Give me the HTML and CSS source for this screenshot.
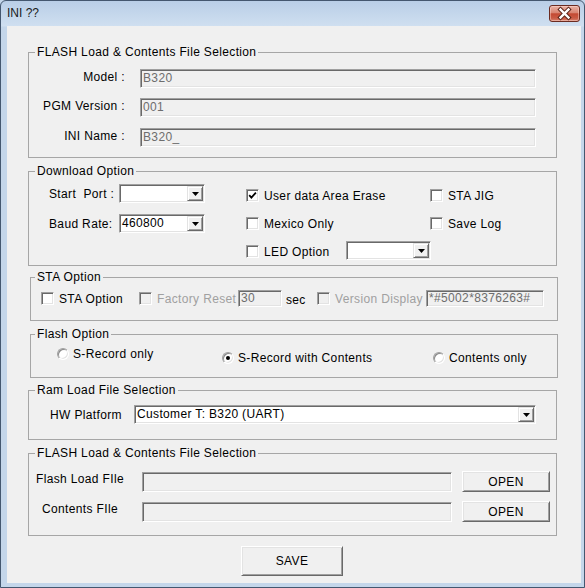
FILE: index.html
```html
<!DOCTYPE html>
<html>
<head>
<meta charset="utf-8">
<title>INI</title>
<link rel="stylesheet" href="styles.css">
</head>
<body>
<div class="window">
  <div class="titlebar">
    <span class="title">INI ??</span>
    <div class="close-btn">
      <svg width="29" height="15" viewBox="0 0 29 15">
        <path d="M10.5 3.5 L18.5 11.5 M18.5 3.5 L10.5 11.5" stroke="#5a2418" stroke-width="4.4" stroke-linecap="square" fill="none"/>
        <path d="M10.5 3.5 L18.5 11.5 M18.5 3.5 L10.5 11.5" stroke="#ffffff" stroke-width="2.4" stroke-linecap="square" fill="none"/>
      </svg>
    </div>
  </div>
  <div class="client">
    <fieldset class="group g1">
      <legend>FLASH Load &amp; Contents File Selection</legend>
      <div class="info-row">
        <span class="info-label">Model :</span>
        <div class="edit disabled info-edit">B320</div>
      </div>
      <div class="info-row r2">
        <span class="info-label">PGM Version :</span>
        <div class="edit disabled info-edit">001</div>
      </div>
      <div class="info-row r3">
        <span class="info-label">INI Name :</span>
        <div class="edit disabled info-edit">B320_</div>
      </div>
    </fieldset>

    <fieldset class="group g2">
      <legend>Download Option</legend>
      <div class="group-body">
        <div class="dl-row">
          <span class="dl-label">Start&nbsp; Port :</span>
          <div class="combo w86"><span class="combo-text"></span><span class="combo-btn"><svg width="7" height="4" viewBox="0 0 7 4"><path d="M0 0H7L3.5 4Z" fill="#000"/></svg></span></div>
          <label class="check col3 low2"><span class="box"><svg width="9" height="9" viewBox="0 0 9 9"><path d="M1.2 4.2 L3.4 6.6 L7.9 1.6" stroke="#000" stroke-width="1.8" fill="none"/></svg></span><span>User data Area Erase</span></label>
          <label class="check low2"><span class="box"></span><span>STA JIG</span></label>
        </div>
        <div class="dl-row row2">
          <span class="dl-label">Baud Rate:</span>
          <div class="combo w86"><span class="combo-text">460800</span><span class="combo-btn"><svg width="7" height="4" viewBox="0 0 7 4"><path d="M0 0H7L3.5 4Z" fill="#000"/></svg></span></div>
          <label class="check col3"><span class="box"></span><span>Mexico Only</span></label>
          <label class="check"><span class="box"></span><span>Save Log</span></label>
        </div>
        <div class="dl-row row3">
          <span class="dl-spacer"></span>
          <label class="check led low1"><span class="box"></span><span>LED Option</span></label>
          <div class="combo w85"><span class="combo-text"></span><span class="combo-btn"><svg width="7" height="4" viewBox="0 0 7 4"><path d="M0 0H7L3.5 4Z" fill="#000"/></svg></span></div>
        </div>
      </div>
    </fieldset>

    <fieldset class="group g3">
      <legend>STA Option</legend>
      <div class="group-body sta-row">
        <label class="check sta1"><span class="box"></span><span>STA Option</span></label>
        <label class="check disabled sta2"><span class="box"></span><span>Factory Reset</span></label>
        <div class="edit disabled sta-edit w44">30</div>
        <span class="sec">sec</span>
        <label class="check disabled sta3"><span class="box"></span><span>Version Display</span></label>
        <div class="edit disabled sta-edit w118">*#5002*8376263#</div>
      </div>
    </fieldset>

    <fieldset class="group g4">
      <legend>Flash Option</legend>
      <div class="group-body radio-row">
        <label class="radio-item ri1"><span class="radio"></span><span>S-Record only</span></label>
        <label class="radio-item ri2"><span class="radio on"></span><span>S-Record with Contents</span></label>
        <label class="radio-item ri3"><span class="radio"></span><span>Contents only</span></label>
      </div>
    </fieldset>

    <fieldset class="group g5">
      <legend>Ram Load File Selection</legend>
      <div class="group-body hw-row">
        <span class="hw-label">HW Platform</span>
        <div class="combo w402"><span class="combo-text">Customer T: B320 (UART)</span><span class="combo-btn"><svg width="7" height="4" viewBox="0 0 7 4"><path d="M0 0H7L3.5 4Z" fill="#000"/></svg></span></div>
      </div>
    </fieldset>

    <fieldset class="group g6">
      <legend>FLASH Load &amp; Contents File Selection</legend>
      <div class="group-body">
        <div class="file-row">
          <span class="file-label">Flash Load FIle</span>
          <div class="edit disabled file-edit"></div>
          <button class="btn open">OPEN</button>
        </div>
        <div class="file-row r2">
          <span class="file-label">Contents FIle</span>
          <div class="edit disabled file-edit"></div>
          <button class="btn open">OPEN</button>
        </div>
      </div>
    </fieldset>

    <div class="actions">
      <button class="btn save">SAVE</button>
    </div>
  </div>
</div>
</body>
</html>
```

FILE: styles.css
```css
* { box-sizing: border-box; }

body {
  margin: 0;
  font-family: "Liberation Sans", Arial, sans-serif;
  font-size: 12px;
  line-height: 14px;
  letter-spacing: 0.35px;
  color: #000;
  background: #c4d6ea;
}

.window {
  width: 585px;
  height: 588px;
  border: 1px solid #44576f;
  border-radius: 6px 6px 0 0;
  background: linear-gradient(180deg, #b9cee7 0, #cfdff0 25px, #c4d6ea 26px, #c4d6ea 100%);
  display: flex;
  flex-direction: column;
  overflow: hidden;
}

.titlebar {
  height: 25px;
  flex: none;
  display: flex;
  align-items: flex-start;
  padding-left: 6px;
}

.title {
  margin-top: 5px;
  color: #1a1a1a;
  letter-spacing: 0;
}

.close-btn {
  margin-left: auto;
  margin-right: 4px;
  margin-top: 4px;
  width: 31px;
  height: 17px;
  border: 1px solid #6b2b20;
  border-radius: 3px;
  background: linear-gradient(180deg, #eab2a4 0%, #d98572 45%, #c44a33 52%, #c95a43 80%, #d8826f 100%);
  box-shadow: inset 0 0 0 1px rgba(255, 225, 215, 0.45);
  display: flex;
  align-items: center;
  justify-content: center;
}

.client {
  flex: 1;
  margin: 0 3px 4px 6px;
  background: #f0f0f0;
  padding: 19px 0 0 21px;
  display: flex;
  flex-direction: column;
  align-items: flex-start;
}

/* group boxes */
.group {
  margin: 0;
  padding: 0;
  border: 1px solid #a6a6a6;
  min-width: 0;
  width: 529px;
  flex: none;
}

.group legend {
  margin-left: 6px;
  padding: 0 2px;
  line-height: 14px;
}

.g3 legend,
.g4 legend { margin-left: 4px; }

.g1 { height: 113px; padding-top: 10px; }
.g2 { height: 102px; margin-top: 6px; padding-top: 6px; }
.g3 { height: 51px; margin-top: 4px; margin-left: 2px; width: 528px; padding-top: 6px; }
.g4 { height: 51px; margin-top: 6px; margin-left: 2px; width: 528px; padding-top: 6px; }
.g5 { height: 57px; margin-top: 5px; padding-top: 8px; }
.g6 { height: 90px; margin-top: 6px; padding-top: 11px; }

.g2 .group-body { padding-left: 20px; }
.g3 .group-body { padding-left: 10px; }
.g4 .group-body { padding-left: 26px; }
.g5 .group-body { padding-left: 21px; }
.g6 .group-body { padding-left: 6px; }

/* sunken edits */
.edit {
  border: 1px solid;
  border-color: #a0a0a0 #ffffff #ffffff #a0a0a0;
  box-shadow: inset 1px 1px 0 #696969, inset -1px -1px 0 #e3e3e3;
  background: #fff;
  padding: 0 2px;
  white-space: nowrap;
  overflow: hidden;
  flex: none;
}

.edit.disabled {
  background: #f0f0f0;
  color: #6d6d6d;
}

/* info rows */
.info-row {
  display: flex;
  align-items: center;
  height: 19px;
}
.info-row.r2 { margin-top: 10px; }
.info-row.r3 { margin-top: 11px; }

.info-label {
  width: 96px;
  flex: none;
  text-align: right;
  margin-right: 15px;
  margin-top: -3px;
}

.info-edit {
  width: 396px;
  height: 19px;
  line-height: 16px;
}

/* combo boxes */
.combo {
  flex: none;
  display: flex;
  height: 19px;
  padding: 1px;
  border: 1px solid;
  border-color: #a0a0a0 #ffffff #ffffff #a0a0a0;
  box-shadow: inset 1px 1px 0 #696969, inset -1px -1px 0 #e3e3e3;
  background: #fff;
}
.w86 { width: 86px; }
.w85 { width: 85px; }
.w402 { width: 402px; }

.combo-text {
  flex: 1;
  padding-left: 1px;
  line-height: 15px;
  white-space: nowrap;
  overflow: hidden;
}

.combo-btn {
  flex: none;
  width: 16px;
  height: 15px;
  border: 1px solid;
  border-color: #e3e3e3 #696969 #696969 #e3e3e3;
  box-shadow: inset 1px 1px 0 #ffffff, inset -1px -1px 0 #a0a0a0;
  background: #f0f0f0;
  display: flex;
  align-items: center;
  justify-content: center;
  padding-top: 1px;
}

/* download option */
.dl-row {
  display: flex;
  align-items: center;
  height: 19px;
}
.dl-row.row2 { margin-top: 11px; }
.dl-row.row3 { margin-top: 8px; }

.dl-label { width: 70px; flex: none; }
.dl-spacer { width: 197px; flex: none; }

.col3 { margin-left: 41px; width: 184px; }
.led { width: 100px; }
.low2 { margin-top: 4px; }
.low1 { margin-top: 2px; }

/* checkboxes */
.check {
  display: flex;
  align-items: center;
  flex: none;
  white-space: nowrap;
}

.box {
  width: 13px;
  height: 13px;
  flex: none;
  margin-right: 5px;
  border: 1px solid;
  border-color: #a0a0a0 #ffffff #ffffff #a0a0a0;
  box-shadow: inset 1px 1px 0 #696969, inset -1px -1px 0 #e3e3e3;
  background: #fff;
  display: flex;
  align-items: center;
  justify-content: center;
}

.check.disabled { color: #a0a0a0; }
.check.disabled .box { background: #f0f0f0; }

/* STA option */
.sta-row {
  display: flex;
  align-items: center;
  height: 17px;
}
.sta1 { width: 98px; }
.sta2 { width: 99px; }
.sta3 { width: 109px; }
.sta-edit { height: 17px; line-height: 15px; }
.w44 { width: 44px; }
.w118 { width: 118px; }
.sec { margin-left: 4px; width: 31px; flex: none; margin-top: 2px; }

/* radios */
.radio-row {
  display: flex;
  height: 18px;
}
.radio-item {
  display: flex;
  align-items: center;
  height: 14px;
  flex: none;
  white-space: nowrap;
}
.ri1 { width: 165px; align-self: flex-start; }
.ri2 { width: 211px; align-self: flex-end; }
.ri3 { align-self: flex-end; }

.radio {
  width: 12px;
  height: 12px;
  flex: none;
  margin-right: 4px;
  border-radius: 50%;
  border: 1px solid;
  border-color: #a0a0a0 #ffffff #ffffff #a0a0a0;
  box-shadow: inset 1px 1px 0 #8a8a8a, inset -1px -1px 0 #e3e3e3;
  background: #fff;
  display: flex;
  align-items: center;
  justify-content: center;
}
.radio.on::after {
  content: "";
  width: 4px;
  height: 4px;
  border-radius: 50%;
  background: #000;
}

/* HW platform */
.hw-row {
  display: flex;
  align-items: center;
  height: 19px;
}
.hw-label { width: 84px; flex: none; }

/* file rows */
.file-row {
  display: flex;
  align-items: flex-start;
  height: 21px;
}
.file-row.r2 { margin-top: 9px; }

.file-label {
  width: 90px;
  flex: none;
  text-align: center;
  line-height: 16px;
}

.file-edit {
  margin-left: 17px;
  margin-top: 1px;
  width: 310px;
  height: 20px;
}

/* buttons */
.btn {
  font: inherit;
  letter-spacing: inherit;
  color: #000;
  margin: 0;
  padding: 0;
  background: #f0f0f0;
  border: 1px solid;
  border-color: #ffffff #696969 #696969 #ffffff;
  box-shadow: inset 1px 1px 0 #e3e3e3, inset -1px -1px 0 #a0a0a0;
  flex: none;
  text-align: center;
}

.open {
  margin-left: 10px;
  width: 88px;
  height: 21px;
}

.actions {
  margin-top: 10px;
  padding-left: 213px;
}

.save {
  width: 102px;
  height: 30px;
}
```
